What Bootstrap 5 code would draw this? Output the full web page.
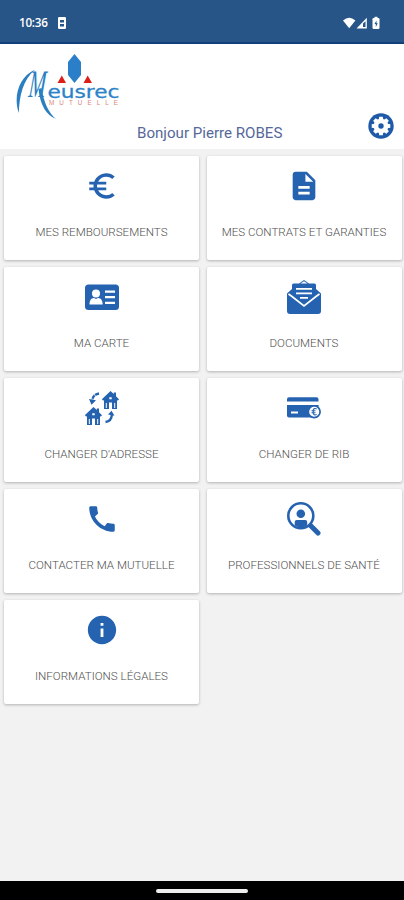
<!DOCTYPE html>
<html lang="fr">
<head>
<meta charset="utf-8">
<meta name="viewport" content="width=device-width, initial-scale=1">
<title>Meusrec Mutuelle</title>
<link href="https://cdn.jsdelivr.net/npm/bootstrap@5.3.0/dist/css/bootstrap.min.css" rel="stylesheet">
<style>
body{font-family:Roboto,"Liberation Sans",sans-serif;background:#f2f2f2;height:900px;overflow:hidden}
.status-bar{height:44px;background:#285587;border-bottom:2px solid #123f7c;padding:3px 23px 0 19px}
.clock{font:600 11.7px/1 "Open Sans",sans-serif;letter-spacing:-.25px}
.brand-bar{height:105px}
.brand-logo{margin:8px 0 0 14px}
.hello{font-size:15.1px;line-height:18px;color:#56689a;width:146px;margin-left:137px;margin-top:3px;white-space:nowrap}
.settings{width:26px;height:26px;margin:-29px 10px 0 auto}
.tiles{padding-top:7px}
.tile-col{padding:0 3px 7px 4px}
.tile-col:nth-child(even){padding-left:4.5px;padding-right:2.5px}
.tile{height:104px;border-radius:2px;box-shadow:0 1px 3px rgba(0,0,0,.27);padding-top:13px}
.tile svg{width:34px;height:34px;fill:#2563b0}
.tile-label{font-size:11.6px;line-height:16px;margin-top:21px;white-space:nowrap;font-weight:300;color:#4f4f4f}
.gesture-bar{height:19px}
.gesture-pill{width:92px;height:4px;background:#eee}
</style>
<script src="https://cdn.jsdelivr.net/npm/bootstrap@5.3.0/dist/js/bootstrap.bundle.min.js"></script>
</head>
<body class="d-flex flex-column">
<header>
  <div class="status-bar d-flex align-items-center text-white">
    <span class="clock">10:36</span>
    <svg class="ms-2" width="12" height="14" viewBox="0 0 12 14"><rect x="2" y="1" width="8" height="12" rx="1.2" fill="#fff"/><path d="M4 4h4v2.500H4zM4 8h4v2.500H4z" fill="#285587"/></svg>
    <svg class="ms-auto" width="39" height="14" viewBox="0 0 39 14" fill="#fff"><path d="M1 4.500Q7.200-1 13.400 4.500L7.200 12.200z"/><path d="M24.800 1.800V12.500H14.500z"/><path d="M21 7.500v3.500h2.500V5.200z" fill="#285587"/><rect x="30.500" y="2" width="7" height="11" rx="1.200"/><path d="M32.500.8h3v2h-3z"/><path d="M34.500 4.500L32.500 8h1.300v3l2-3.700h-1.300z" fill="#285587"/></svg>
  </div>
  <div class="brand-bar bg-white d-flex flex-column align-items-start">
    <svg class="brand-logo flex-shrink-0" width="110" height="69" viewBox="14 52 110 69">
      <path d="M74.500 54l6.500 8v13l-6.500 8-6.500-8V62z" fill="#2b7fc9"/>
      <path d="M57.500 83l4.300-7.500L66 83zM83.500 83l4.200-7.500L92 83z" fill="#dc2019"/>
      <path d="M18.800 113C13 96 19 77 35 69.500 23 80 19.500 95 18.800 113z" fill="#2b7fc0"/>
      <path d="M41.500 88q3.500 22 14.500 31-15-6-17.500-30z" fill="#2b7fc0"/>
      <text transform="translate(28 97) skewX(-5)" textLength="17" lengthAdjust="spacingAndGlyphs" font-family="Liberation Serif,serif" font-style="italic" font-size="39" fill="#2b7fc0">M</text>
      <text x="47.500" y="97.500" textLength="72" lengthAdjust="spacingAndGlyphs" font-family="DejaVu Sans,sans-serif" font-size="18" fill="#2c82c8" stroke="#2c82c8" stroke-width=".3">eusrec</text>
      <text x="49" y="105.200" textLength="69" font-family="Liberation Sans,sans-serif" font-size="6.300" fill="#d8867f">MUTUELLE</text>
    </svg>
    <div class="hello flex-shrink-0"><span>Bonjour Pierre ROBES</span></div>
    <svg class="settings flex-shrink-0" viewBox="0 0 26 26"><circle cx="13" cy="13" r="12.700" fill="#1f5aa8"/><g fill="#fff"><circle cx="13" cy="13" r="7.300"/><path id="tooth" d="M11.200 3.700h3.600l.6 4h-4.800zM11.200 22.300h3.600l.6-4h-4.800z"/><use href="#tooth" transform="rotate(45 13 13)"/><use href="#tooth" transform="rotate(90 13 13)"/><use href="#tooth" transform="rotate(135 13 13)"/></g><circle cx="13" cy="13" r="2.700" fill="#1f5aa8"/></svg>
  </div>
</header>
<main class="tiles row g-0 align-content-start flex-grow-1">
  <div class="col-6 tile-col"><div class="tile bg-white d-flex flex-column align-items-center">
    <svg viewBox="0 0 24 24"><path d="M15 18.500c-2.510 0-4.680-1.420-5.760-3.500H15v-2H8.580c-.05-.33-.08-.66-.08-1s.03-.67.08-1H15V9H9.240C10.320 6.920 12.500 5.500 15 5.500c1.610 0 3.090.59 4.230 1.570L21 5.300C19.410 3.870 17.300 3 15 3c-3.920 0-7.240 2.510-8.480 6H3v2h3.060c-.04.33-.06.66-.06 1s.02.67.06 1H3v2h3.520c1.240 3.490 4.560 6 8.480 6 2.310 0 4.410-.87 6-2.300l-1.780-1.770c-1.130.98-2.600 1.570-4.220 1.570z"/></svg>
    <div class="tile-label">MES REMBOURSEMENTS</div></div></div>
  <div class="col-6 tile-col"><div class="tile bg-white d-flex flex-column align-items-center">
    <svg viewBox="0 0 24 24"><path d="M14 2H6c-1.100 0-1.990.9-1.990 2L4 20c0 1.100.89 2 1.990 2H18c1.100 0 2-.9 2-2V8l-6-6zm2 16H8v-2h8v2zm0-4H8v-2h8v2zm-3-5V3.500L18.500 9H13z"/></svg>
    <div class="tile-label">MES CONTRATS ET GARANTIES</div></div></div>
  <div class="col-6 tile-col"><div class="tile bg-white d-flex flex-column align-items-center">
    <svg viewBox="0 0 34 34"><rect x="0" y="4.500" width="34" height="25.500" rx="3.500"/><g fill="#fff"><circle cx="11" cy="13.500" r="4"/><path d="M4.500 24.500c0-4.500 2-6.500 4.500-6.500l2 1 2-1c2.500 0 4.700 2 4.700 6.500z"/><path d="M20 10.500h10v2.300H20zM20 16h10v2.300H20zM20 21.700h10V24H20z"/></g></svg>
    <div class="tile-label">MA CARTE</div></div></div>
  <div class="col-6 tile-col"><div class="tile bg-white d-flex flex-column align-items-center">
    <svg viewBox="0 0 34 34"><path d="M0 13.500L5 9V5q0-1.500 1.500-1.500H12L17 0l5 3.500h5.500Q29 3.500 29 5v4l5 4.500V31q0 3-3 3H3q-3 0-3-3z"/><path d="M13.500 3.500L17 1.300l3.500 2.200z" fill="#fff"/><path d="M1.500 14L5 16.500l12 9.300 12-9.300 3.500-2.500" fill="none" stroke="#fff" stroke-width="1.700"/><path d="M9 8h16v1.800H9zM9 12.500h16v1.800H9zM13 17h8v1.800h-8z" fill="#fff"/></svg>
    <div class="tile-label">DOCUMENTS</div></div></div>
  <div class="col-6 tile-col"><div class="tile bg-white d-flex flex-column align-items-center">
    <svg viewBox="0 0 34 34"><g id="house"><path d="M25.500 0l3.300 3.100V1.500h2.200v3.700l3 3-1.200 1.500-.8-.7v9H19V9l-.8.700L16.900 8.200z"/><path d="M24 11.500h3V18h-3zM24.300 6.300h2.400v2h-2.400zM20.800 12h1v5h-1zM29.200 12h1v5h-1z" fill="#fff"/></g><use href="#house" x="-17" y="16"/><path d="M14 2.500Q8 3.500 7.300 9" fill="none" stroke="#2563b0" stroke-width="2.300" stroke-dasharray="4 .8"/><path d="M4 8l7 1.200-4.500 4.500zM23 23.500l3.500-3.700 3 5z"/><path d="M20.500 31q6-.8 6.300-7" fill="none" stroke="#2563b0" stroke-width="2.400"/></svg>
    <div class="tile-label">CHANGER D'ADRESSE</div></div></div>
  <div class="col-6 tile-col"><div class="tile bg-white d-flex flex-column align-items-center">
    <svg viewBox="0 0 34 34"><path d="M0 10.500V8.300q0-2 2-2h27.500q2 0 2 2v2.200zM0 14h31.500v10.500q0 2-2 2H2q-2 0-2-2z"/><path d="M4 20.500h7v2H4z" fill="#fff"/><circle cx="27.200" cy="20.700" r="5.900" fill="#fff" stroke="#2563b0" stroke-width="1.700"/><path d="M29.700 18q-2.500-1.500-3.500 1v3.400q1 2.500 3.500 1M24.500 19.800h4M24.500 21.700h4" fill="none" stroke="#2563b0" stroke-width="1.100"/></svg>
    <div class="tile-label">CHANGER DE RIB</div></div></div>
  <div class="col-6 tile-col"><div class="tile bg-white d-flex flex-column align-items-center">
    <svg viewBox="0 0 24 24"><path d="M20.010 15.380c-1.230 0-2.420-.2-3.530-.56-.35-.12-.74-.03-1.010.24l-1.570 1.970c-2.830-1.350-5.480-3.900-6.890-6.830l1.950-1.660c.27-.28.35-.67.24-1.020-.37-1.110-.56-2.300-.56-3.530 0-.54-.45-.99-.99-.99H4.190C3.650 3 3 3.240 3 3.990 3 13.280 10.730 21 20.010 21c.71 0 .99-.63.99-1.180v-3.450c0-.54-.45-.99-.99-.99z"/></svg>
    <div class="tile-label">CONTACTER MA MUTUELLE</div></div></div>
  <div class="col-6 tile-col"><div class="tile bg-white d-flex flex-column align-items-center">
    <svg viewBox="0 0 34 34"><path d="M23 23l8 8" stroke="#2563b0" stroke-width="5" stroke-linecap="round"/><circle cx="13.800" cy="13.800" r="12.500" fill="#fff" stroke="#2563b0" stroke-width="2.600"/><circle cx="13.800" cy="11.800" r="4.300"/><path d="M7.700 23.500V20q0-2 2-2h8.500q2 0 2 2v3.500q-6 4-12.500 0z"/></svg>
    <div class="tile-label">PROFESSIONNELS DE SANTÉ</div></div></div>
  <div class="col-6 tile-col"><div class="tile bg-white d-flex flex-column align-items-center">
    <svg viewBox="0 0 24 24"><path d="M12 2C6.480 2 2 6.480 2 12s4.480 10 10 10 10-4.480 10-10S17.520 2 12 2zm1 15h-2v-6h2v6zm0-8h-2V7h2v2z"/></svg>
    <div class="tile-label">INFORMATIONS LÉGALES</div></div></div>
</main>
<footer class="gesture-bar bg-black d-flex align-items-center justify-content-center"><div class="gesture-pill rounded-pill"></div></footer>
</body>
</html>
